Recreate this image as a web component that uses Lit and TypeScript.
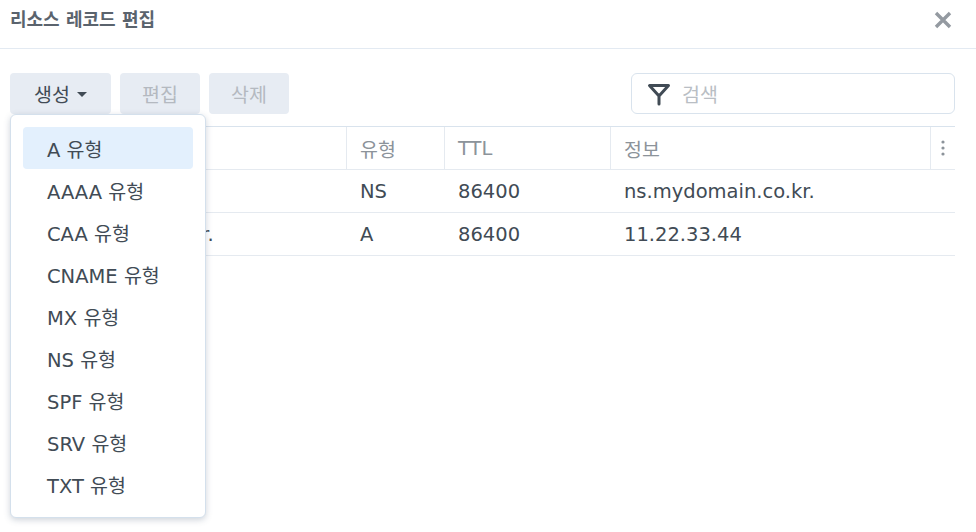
import { LitElement, html, css, svg } from "lit";
import { customElement } from "lit/decorators.js";

const TYPES = ["A", "AAAA", "CAA", "CNAME", "MX", "NS", "SPF", "SRV", "TXT"];
const ROWS = [
  ["mydomain.co.kr.", "NS", "86400", "ns.mydomain.co.kr."],
  ["ns.mydomain.co.kr.", "A", "86400", "11.22.33.44"],
];

@customElement("app-root")
export class AppRoot extends LitElement {
  static styles = css`
    :host {
      display: block;
      width: 976px;
      height: 532px;
      overflow: hidden;
      background: #fff;
      color: #414b55;
      font-family: "DejaVu Sans", "Noto Sans CJK KR", sans-serif;
      font-size: 19.5px;
    }
    .head {
      height: 48px;
      box-sizing: content-box;
      border-bottom: 1px solid #e3eaf2;
      display: flex;
      align-items: flex-start;
      justify-content: space-between;
      padding: 0 24px 0 10px;
    }
    .title {
      font-size: 18px;
      font-weight: 700;
      color: #5a636d;
      line-height: 40px;
    }
    .close {
      margin-top: 11px;
      display: block;
    }
    .body {
      padding: 24px 21px 0 10px;
    }
    .bar {
      display: flex;
      align-items: flex-start;
      gap: 9px;
      height: 41px;
      margin-bottom: 12px;
    }
    .btn {
      height: 41px;
      width: 80px;
      border-radius: 4px;
      background: #e7ecf3;
      display: flex;
      align-items: center;
      justify-content: center;
      gap: 7px;
      color: #b4b9c0;
    }
    .btn.main {
      width: 101px;
      color: #414b55;
    }
    .caret {
      width: 0;
      height: 0;
      border-left: 5px solid transparent;
      border-right: 5px solid transparent;
      border-top: 5px solid #414b55;
      margin-top: 2px;
    }
    .drop {
      position: relative;
    }
    .menu {
      position: absolute;
      left: 0;
      top: 41px;
      width: 196px;
      box-sizing: border-box;
      height: 404px;
      padding: 12px 12px;
      background: #fff;
      border: 1px solid #d4e0ec;
      border-radius: 6px;
      box-shadow: 0 2px 6px rgba(65, 85, 110, 0.25);
      z-index: 2;
    }
    .item {
      height: 42px;
      width: 170px;
      box-sizing: border-box;
      padding-left: 24px;
      display: flex;
      align-items: center;
      border-radius: 4px;
      white-space: nowrap;
    }
    .item.on {
      background: #e3f0fd;
    }
    .search {
      margin-left: auto;
      width: 324px;
      height: 41px;
      box-sizing: border-box;
      border: 1px solid #d9e3ed;
      border-radius: 6px;
      display: flex;
      align-items: center;
      gap: 11px;
      padding-left: 15px;
      color: #b9bec4;
    }
    .table {
      border-top: 1px solid #d9e3ed;
    }
    .row {
      display: grid;
      grid-template-columns: 337px 98px 166px 320px 24px;
      height: 42px;
      border-bottom: 1px solid #e5eaf0;
      align-items: center;
    }
    .row.hd {
      color: #8c939a;
    }
    .cell {
      height: 100%;
      box-sizing: border-box;
      padding-left: 13px;
      display: flex;
      align-items: center;
      white-space: nowrap;
    }
    .row.hd .cell {
      border-right: 1px solid #e5eaf0;
    }
    .row.hd .cell:last-child {
      border-right: 0;
      padding-left: 10px;
    }
  `;

  render() {
    return html`
      <div class="head">
        <div class="title">리소스 레코드 편집</div>
        <svg class="close" width="18" height="18" viewBox="0 0 18 18">
          <path d="M2 2 L16 16 M16 2 L2 16" stroke="#949aa1" stroke-width="3.4" fill="none" />
        </svg>
      </div>
      <div class="body">
        <div class="bar">
          <div class="drop">
            <div class="btn main">생성 <span class="caret"></span></div>
            <div class="menu">
              ${TYPES.map(
                (t, i) => html`<div class="item ${i === 0 ? "on" : ""}">${t} 유형</div>`
              )}
            </div>
          </div>
          <div class="btn">편집</div>
          <div class="btn">삭제</div>
          <div class="search">
            ${svg`<svg width="24" height="24" viewBox="0 0 24 24">
              <path d="M2.5 3.5 H21.5 L12 14 Z M12 13 V22" stroke="#414b55" stroke-width="3" fill="none" stroke-linejoin="round" stroke-linecap="round" />
            </svg>`}
            <span>검색</span>
          </div>
        </div>
        <div class="table">
          <div class="row hd">
            <div class="cell">이름</div>
            <div class="cell">유형</div>
            <div class="cell">TTL</div>
            <div class="cell">정보</div>
            <div class="cell">
              <svg width="4" height="16" viewBox="0 0 4 16">
                <circle cx="2" cy="2" r="1.6" fill="#8c939a" />
                <circle cx="2" cy="8" r="1.6" fill="#8c939a" />
                <circle cx="2" cy="14" r="1.6" fill="#8c939a" />
              </svg>
            </div>
          </div>
          ${ROWS.map(
            (r) => html`<div class="row">
              ${r.map((c) => html`<div class="cell">${c}</div>`)}
              <div class="cell"></div>
            </div>`
          )}
        </div>
      </div>
    `;
  }
}
